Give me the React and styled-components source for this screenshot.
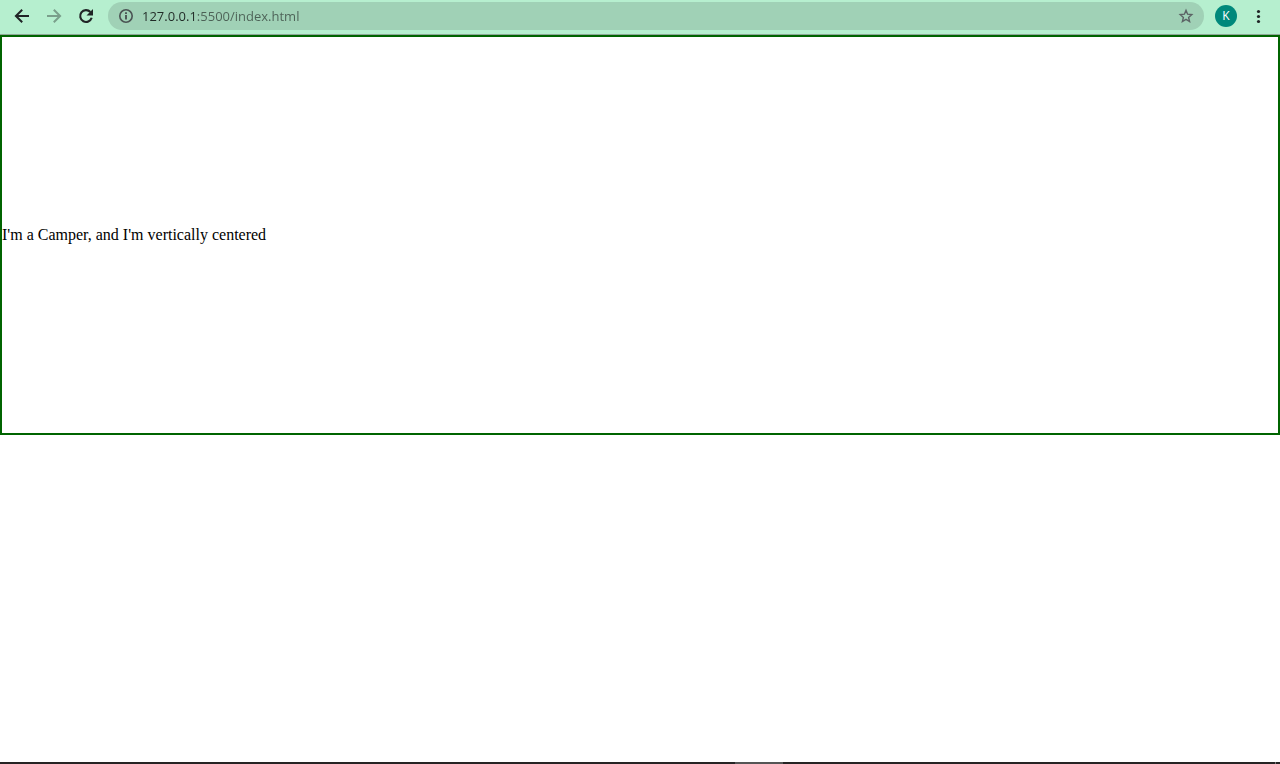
import React from "react";
import styled, { createGlobalStyle } from "styled-components";

const GlobalStyle = createGlobalStyle`
  *, *::before, *::after { box-sizing: border-box; }
  body { margin: 0; background: #fff; }
`;

const Window = styled.div`
  display: flex;
  flex-direction: column;
  min-height: 100vh;
`;

const Toolbar = styled.header`
  display: flex;
  align-items: center;
  height: 35px;
  padding: 2px 6px 4px;
  background: #b6efcf;
  border-bottom: 1px solid #8fa899;
`;

const IconButton = styled.button`
  display: flex;
  flex: none;
  align-items: center;
  justify-content: center;
  width: 32px;
  height: 28px;
  padding: 0;
  border: 0;
  background: none;
  color: ${(p) => p.$color || "#202426"};
`;

const AddressBar = styled.form`
  display: flex;
  flex: 1;
  align-items: center;
  height: 28px;
  margin: 0 6px;
  padding: 0 2px;
  border-radius: 14px;
  background: #a0d1b6;
`;

const Address = styled.input`
  flex: 1;
  min-width: 0;
  height: 28px;
  padding: 0;
  border: 0;
  outline: 0;
  font: 13px/28px "Open Sans", "Noto Sans", sans-serif;
  color: #202a26;
  background: linear-gradient(90deg, #202a26 55px, #4c6156 55px);
  background-clip: text;
  -webkit-background-clip: text;
  -webkit-text-fill-color: transparent;
`;

const Avatar = styled.span`
  display: grid;
  place-items: center;
  width: 22px;
  height: 22px;
  border-radius: 50%;
  background: #00897b;
  color: #fff;
  font: 12px/22px "Open Sans", sans-serif;
`;

const Actions = styled.nav`
  display: flex;
`;

const Container = styled.main`
  display: flex;
  align-items: center;
  height: 400px;
  border: 2px solid #006400;
`;

const Message = styled.p`
  margin: 0;
  font: 16px/18px "Liberation Serif", "Times New Roman", serif;
  color: #000;
`;

const Taskbar = styled.footer`
  display: grid;
  grid-template-columns: 1fr 48px 1fr;
  height: 2px;
  margin-top: auto;
  padding: 0 4px 0 242px;
  background: #262424;
`;

const TaskbarApp = styled.span`
  grid-column: 2;
  background: #555;
`;

const ShowDesktop = styled.span`
  justify-self: end;
  width: 1px;
  background: #777;
`;

const Icon = ({ children }) => (
  <svg width="16" height="16" viewBox="0 0 16 16" fill="none" stroke="currentColor" aria-hidden="true">
    {children}
  </svg>
);

export default function App() {
  return (
    <>
      <GlobalStyle />
      <Window>
        <Toolbar>
          <Actions aria-label="Navigation">
            <IconButton type="button" aria-label="Back">
              <Icon><path d="M15 8H2.6M8.2 1.7 1.9 8l6.3 6.3" strokeWidth="2" /></Icon>
            </IconButton>
            <IconButton type="button" aria-label="Forward" $color="#7a9f8b">
              <Icon><path d="M1 8h12.4M7.8 1.7 14.1 8l-6.3 6.3" strokeWidth="2" /></Icon>
            </IconButton>
            <IconButton type="button" aria-label="Reload">
              <Icon>
                <path d="M12.4 4A5.9 5.9 0 1 0 13.7 9.8" strokeWidth="2.1" />
                <path d="M15 1v6.5H8.5z" fill="currentColor" stroke="none" />
              </Icon>
            </IconButton>
          </Actions>
          <AddressBar onSubmit={(e) => e.preventDefault()}>
            <IconButton type="button" aria-label="Site information" $color="#4a5353">
              <Icon>
                <circle cx="8" cy="8" r="6.2" strokeWidth="1.6" />
                <path d="M8 7v4.5M8 4.3v1.7" strokeWidth="1.9" />
              </Icon>
            </IconButton>
            <Address aria-label="Address" defaultValue="127.0.0.1:5500/index.html" spellCheck={false} />
            <IconButton type="button" aria-label="Bookmark this page" $color="#5c6365">
              <Icon>
                <path d="m8 2.3 1.6 3.9 4.2.4-3.2 2.8 1 4.1L8 11.3l-3.6 2.2 1-4.1-3.2-2.8 4.2-.4z" strokeWidth="1.4" />
              </Icon>
            </IconButton>
          </AddressBar>
          <Actions aria-label="Browser">
            <IconButton type="button" aria-label="Profile">
              <Avatar>K</Avatar>
            </IconButton>
            <IconButton type="button" aria-label="Menu">
              <Icon>
                <g fill="currentColor" stroke="none">
                  <circle cx="8.5" cy="3.5" r="1.6" />
                  <circle cx="8.5" cy="8.5" r="1.6" />
                  <circle cx="8.5" cy="13.5" r="1.6" />
                </g>
              </Icon>
            </IconButton>
          </Actions>
        </Toolbar>
        <Container>
          <Message>I'm a Camper, and I'm vertically centered</Message>
        </Container>
        <Taskbar>
          <TaskbarApp />
          <ShowDesktop />
        </Taskbar>
      </Window>
    </>
  );
}
